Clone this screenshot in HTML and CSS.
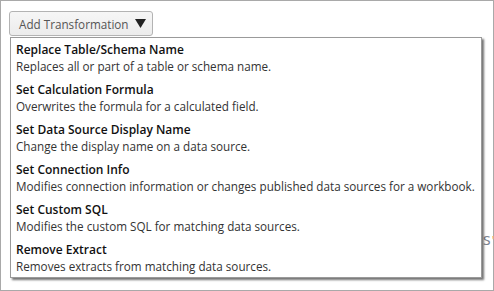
FILE: index.html
```html
<!DOCTYPE html>
<html>
<head>
<meta charset="utf-8">
<link rel="stylesheet" href="styles.css">
</head>
<body>
<div class="frame">
  <button class="add-btn"><span class="btn-label">Add Transformation</span><svg class="caret" width="11" height="9" viewBox="0 0 11 9"><path d="M0 0 H11 L5.5 9 Z" fill="#222"/></svg></button>
  <span class="behind">s<span class="behind-mark">'</span></span>
  <ul class="menu">
    <li class="item"><div class="title">Replace Table/Schema Name</div><div class="desc">Replaces all or part of a table or schema name.</div></li>
    <li class="item"><div class="title">Set Calculation Formula</div><div class="desc">Overwrites the formula for a calculated field.</div></li>
    <li class="item"><div class="title">Set Data Source Display Name</div><div class="desc">Change the display name on a data source.</div></li>
    <li class="item"><div class="title">Set Connection Info</div><div class="desc">Modifies connection information or changes published data sources for a workbook.</div></li>
    <li class="item"><div class="title">Set Custom SQL</div><div class="desc">Modifies the custom SQL for matching data sources.</div></li>
    <li class="item"><div class="title">Remove Extract</div><div class="desc">Removes extracts from matching data sources.</div></li>
  </ul>
</div>
</body>
</html>
```
FILE: styles.css
```css
html, body {
  margin: 0;
  padding: 0;
  background: #fff;
}
.frame {
  position: relative;
  width: 494px;
  height: 291px;
  box-sizing: border-box;
  border: 1px solid #a9a9a9;
  padding: 10px 0 0 8px;
  font-family: "Open Sans", Lato, sans-serif;
}
.add-btn {
  display: flex;
  align-items: center;
  height: 25px;
  width: 144px;
  box-sizing: border-box;
  margin: 0;
  padding: 0 0 0 9px;
  border: 1px solid #b3b3b3;
  border-radius: 3px;
  background: linear-gradient(#f6f6f6, #ececec);
  color: #555;
  font-family: "Open Sans", Lato, sans-serif;
  font-size: 11.7px;
  line-height: 22px;
  white-space: nowrap;
}
.btn-label {
  flex: none;
}
.caret {
  flex: none;
  margin-left: 6px;
}
.menu {
  list-style: none;
  margin: 1px 0 0 1px;
  padding: 4px 0 3px 5px;
  width: 472px;
  height: 241px;
  box-sizing: border-box;
  border: 1px solid #9a9a9a;
  background: #fff;
  box-shadow: 2px 2px 2px rgba(0, 0, 0, 0.55);
  position: relative;
  z-index: 2;
}
.item {
  margin: 0 0 8px 0;
}
.item:last-child {
  margin-bottom: 0;
}
.title {
  font-weight: 600;
  font-size: 12px;
  line-height: 16px;
  color: #111;
}
.desc {
  font-size: 11.7px;
  line-height: 16px;
  color: #333;
}
.behind {
  position: absolute;
  left: 482px;
  top: 227px;
  font-size: 16px;
  color: #7b8391;
  z-index: 1;
}
.behind-mark {
  color: #e8a15a;
  font-size: 12px;
  margin-left: 1px;
}
```
